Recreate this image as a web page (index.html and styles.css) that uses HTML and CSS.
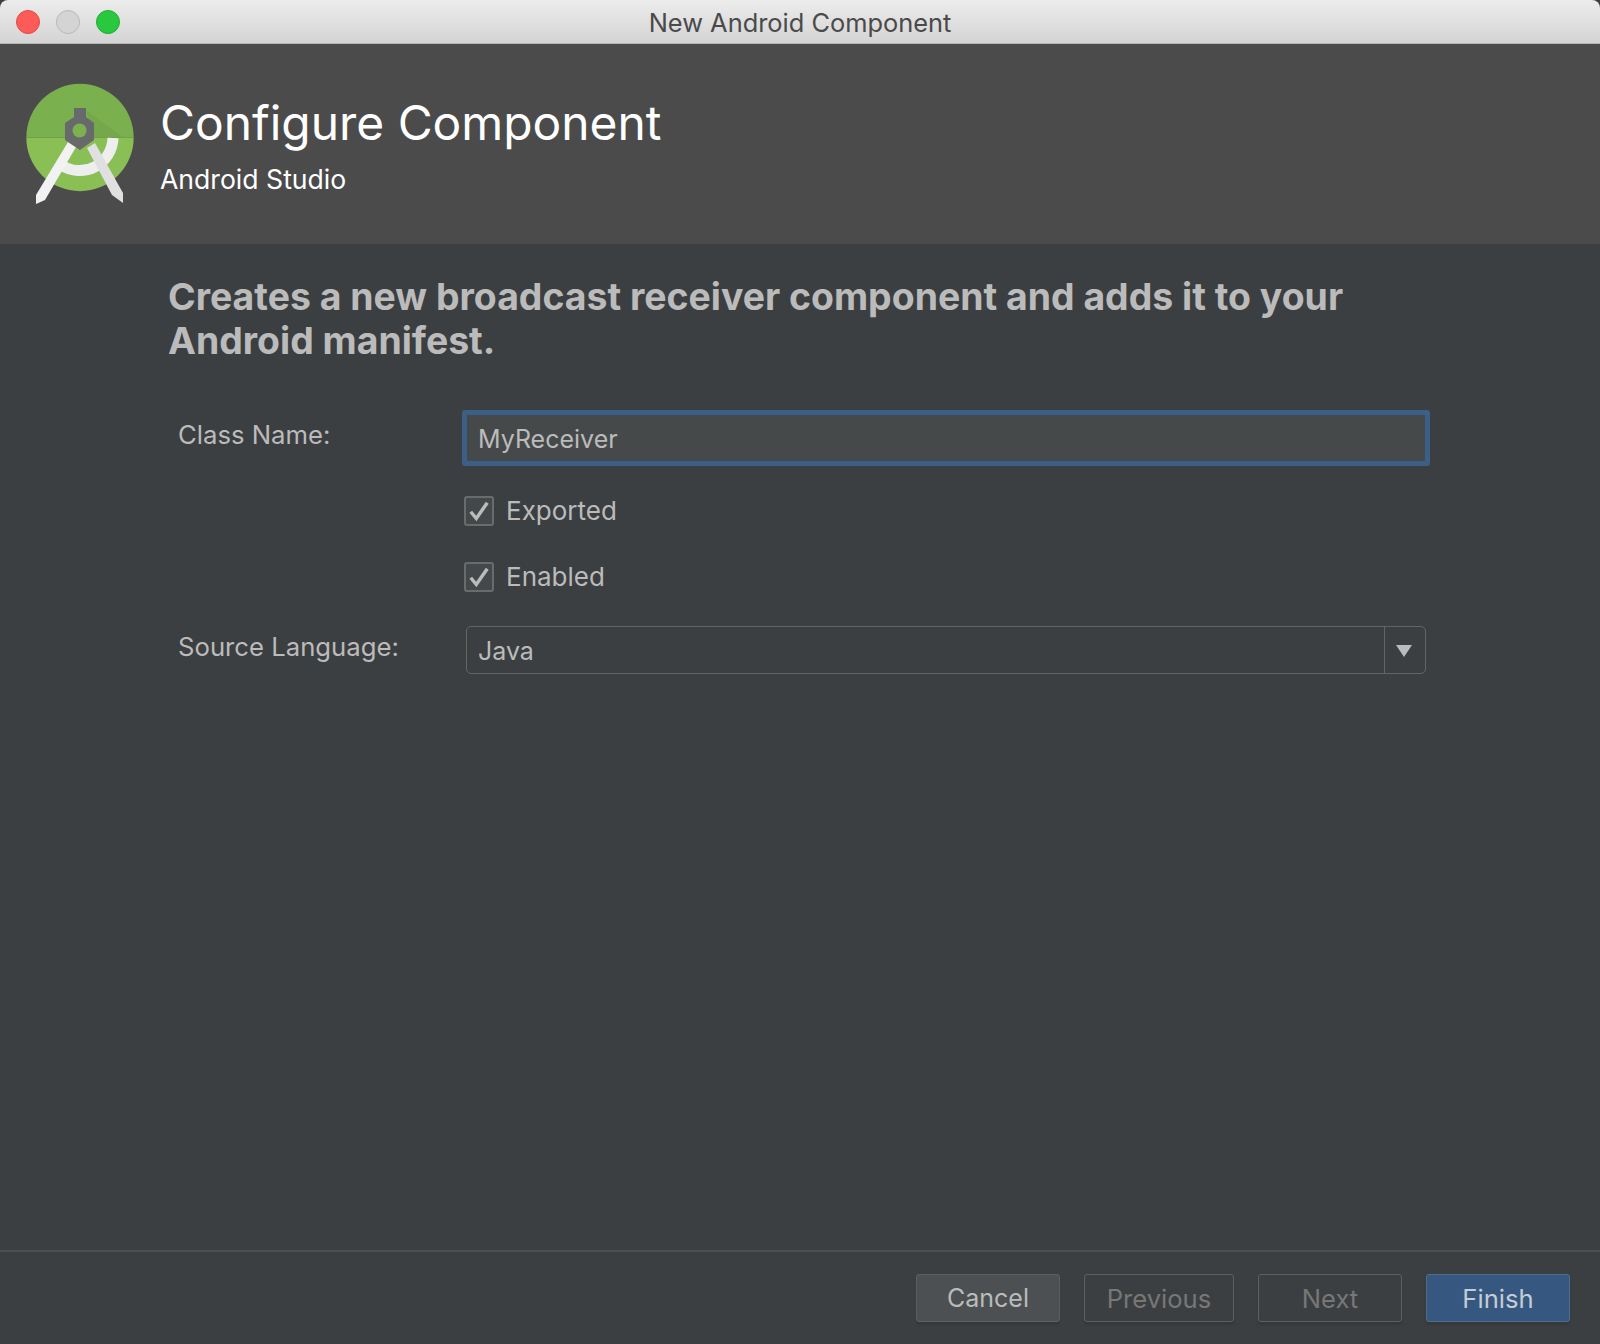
FILE: index.html
```html
<!DOCTYPE html>
<html>
<head>
    <meta charset="UTF-8">
    <title>New Android Component</title>
    <link rel="stylesheet" href="styles.css">
</head>
<body>
    <div class="window">
        <div class="titlebar">
            <div class="lights">
                <span class="light red"></span>
                <span class="light gray"></span>
                <span class="light green"></span>
            </div>
            <div class="window-title">New Android Component</div>
        </div>

        <div class="header">
            <svg class="logo" viewBox="24 82 112 124" width="112" height="124">
                <path d="M26.3 137.500a53.7 53.7 0 0 1 107.400 0z" fill="#7ab04d"/>
                <path d="M26.3 137.500a53.7 53.7 0 0 0 107.400 0z" fill="#8abf56"/>
                <path d="M86 110l37 27.500H94z" fill="#6f9f47" opacity="0.5"/>
                <path d="M61 165A33.500 33.500 0 0 0 113 138" fill="none" stroke="#eeeeee" stroke-width="11"/>
                <path d="M68 142l8 5-31 53-9 4v-9z" fill="#f2f2f2"/>
                <path d="M87 148l8-5 28 50v10l-11-8z" fill="#e0e0e0"/>
                <path d="M74 108h12v9l8 6v17l-14 10-15-10v-17l9-6z" fill="#68696b"/>
                <circle cx="79.500" cy="130.500" r="7" fill="#7cb14e"/>
            </svg>
            <div class="header-text">
                <h1>Configure Component</h1>
                <div class="subtitle">Android Studio</div>
            </div>
        </div>

        <div class="content">
            <h2>Creates a new broadcast receiver component and adds it to your Android manifest.</h2>

            <div class="form">
                <div class="row row-name">
                    <label class="field-label">Class Name:</label>
                    <div class="text-input">MyReceiver</div>
                </div>
                <div class="row row-check">
                    <span class="checkbox">
                        <svg viewBox="0 0 16 16" width="24" height="24"><path d="M2.500 8.500l3.700 4.500L13.500 2.500" fill="none" stroke="#bbbbbb" stroke-width="2.300"/></svg>
                    </span>
                    <span class="check-label">Exported</span>
                </div>
                <div class="row row-check">
                    <span class="checkbox">
                        <svg viewBox="0 0 16 16" width="24" height="24"><path d="M2.500 8.500l3.700 4.500L13.500 2.500" fill="none" stroke="#bbbbbb" stroke-width="2.300"/></svg>
                    </span>
                    <span class="check-label">Enabled</span>
                </div>
                <div class="row row-lang">
                    <label class="field-label">Source Language:</label>
                    <div class="select">
                        <span class="select-value">Java</span>
                        <span class="select-arrow"><span class="arrow"></span></span>
                    </div>
                </div>
            </div>
        </div>

        <div class="footer">
            <button class="button btn-cancel">Cancel</button>
            <button class="button btn-prev" disabled>Previous</button>
            <button class="button btn-next" disabled>Next</button>
            <button class="button btn-finish">Finish</button>
        </div>
    </div>
</body>
</html>
```

FILE: styles.css
```css
/* Dialog window */
html, body {
    margin: 0;
    height: 100%;
    background-color: #3c3f41;
}
body {
    font-family: Inter, "Noto Sans", sans-serif;
    color: #bbbbbb;
}
.window {
    height: 1344px;
    display: flex;
    flex-direction: column;
    background-color: #3c3f41;
    overflow: hidden;
}

/* Title bar */
.titlebar {
    height: 43px;
    flex: none;
    display: flex;
    align-items: center;
    position: relative;
    background: linear-gradient(#ececec, #d4d4d4);
    border-bottom: 1px solid #b4b4b4;
    border-radius: 8px 8px 0 0;
}
.lights {
    display: flex;
    gap: 16px;
    padding-left: 16px;
}
.light {
    width: 22px;
    height: 22px;
    border-radius: 50%;
    border: 1px solid transparent;
}
.red { background-color: #fc5b57; border-color: #e24a44; }
.gray { background-color: #d4d4d4; border-color: #b9b9b9; }
.green { background-color: #29c83f; border-color: #1fae2f; }
.window-title {
    position: absolute;
    left: 0;
    right: 0;
    top: 8px;
    text-align: center;
    font-size: 25.4px;
    line-height: 30px;
    color: #4a4a4a;
}

/* Banner */
.header {
    height: 200px;
    flex: none;
    display: flex;
    background-color: #4b4b4b;
    color: #ffffff;
}
.logo {
    margin: 38px 0 0 24px;
    flex: none;
}
.header-text {
    margin-left: 24px;
}
h1 {
    margin: 51px 0 0 0;
    font-size: 47.9px;
    line-height: 56px;
    font-weight: 400;
}
.subtitle {
    margin-top: 13px;
    font-size: 26.6px;
    line-height: 30px;
}

/* Main content */
.content {
    flex: 1;
    padding: 31px 170px 0 168px;
}
h2 {
    margin: 0;
    font-size: 37.4px;
    line-height: 44px;
    font-weight: 700;
    color: #bbbbbb;
}
.form {
    margin-top: 47px;
    padding-left: 10px;
    font-size: 25.7px;
}
.row {
    display: flex;
}
.field-label {
    width: 284px;
    flex: none;
}
.row-name .field-label {
    margin-top: 9px;
}
.text-input {
    width: 968px;
    height: 56px;
    box-sizing: border-box;
    padding-left: 11px;
    font-size: 25px;
    line-height: 49px;
    background-color: #45494a;
    border: 5px solid #3b5f86;
    border-radius: 3px;
}
.row-check {
    margin-top: 30px;
    padding-left: 286px;
    align-items: center;
    height: 30px;
}
.row-check + .row-check {
    margin-top: 36px;
}
.checkbox {
    width: 30px;
    height: 30px;
    box-sizing: border-box;
    display: flex;
    align-items: center;
    justify-content: center;
    background-color: #43494a;
    border: 2px solid #6b6b6b;
    border-radius: 3px;
}
.check-label {
    margin-left: 12px;
    margin-top: -1px;
    font-size: 26px;
}
.row-lang {
    margin-top: 34px;
}
.row-lang .field-label {
    margin-top: 5px;
}
.select {
    width: 960px;
    height: 48px;
    margin-left: 4px;
    box-sizing: border-box;
    display: flex;
    border: 1px solid #646464;
    border-radius: 5px;
}
.select-value {
    flex: 1;
    padding-left: 11px;
    font-size: 25px;
    line-height: 49px;
}
.select-arrow {
    width: 40px;
    display: flex;
    align-items: center;
    justify-content: center;
    border-left: 1px solid #646464;
}
.arrow {
    width: 0;
    height: 0;
    margin-left: -2px;
    margin-top: 2px;
    border-left: 8px solid transparent;
    border-right: 8px solid transparent;
    border-top: 12px solid #bbbbbb;
}

/* Buttons */
.footer {
    height: 94px;
    flex: none;
    box-sizing: border-box;
    display: flex;
    justify-content: flex-end;
    gap: 24px;
    padding: 22px 30px 0 0;
    border-top: 2px solid #4d4f51;
    border-radius: 0 0 8px 8px;
}
.button {
    height: 48px;
    font-family: inherit;
    font-size: 25.6px;
    border-radius: 3px;
    border: 1px solid #5e6060;
    background-color: #3c3f41;
    color: #bbbbbb;
    box-shadow: 0 3px 2px #36393b;
    padding: 0;
}
.btn-cancel { width: 144px; background-color: #4c5052; font-size: 25px; }
.btn-prev { width: 150px; color: #777777; }
.btn-next { width: 144px; color: #777777; }
.btn-finish { width: 144px; background-color: #365880; border-color: #4c708c; color: #c4ccd4; }
```
